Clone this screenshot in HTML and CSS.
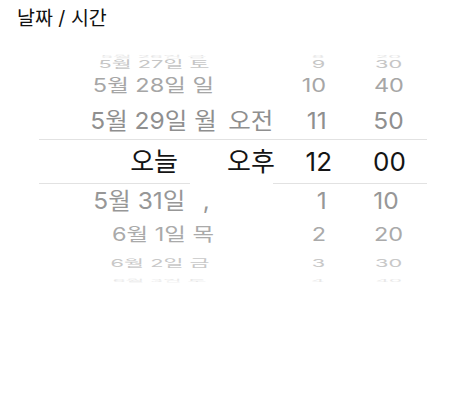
FILE: index.html
```html
<!DOCTYPE html>
<html lang="ko">
<head>
<meta charset="utf-8">
<link rel="stylesheet" href="styles.css">
</head>
<body>
<h1 class="title">날짜 / 시간</h1>
<div class="picker">
  <div class="row r4"><span class="c date">5월 26일 금</span><span class="c ampm"></span><span class="c hour">8</span><span class="c min">20</span></div>
  <div class="row r3"><span class="c date">5월 27일 토</span><span class="c ampm"></span><span class="c hour">9</span><span class="c min">30</span></div>
  <div class="row r2"><span class="c date">5월 28일 일</span><span class="c ampm"></span><span class="c hour">10</span><span class="c min">40</span></div>
  <div class="row r1"><span class="c date">5월 29일 월</span><span class="c ampm">오전</span><span class="c hour">11</span><span class="c min">50</span></div>
  <div class="row sel"><span class="c date">오늘</span><span class="c ampm">오후</span><span class="c hour">12</span><span class="c min">00</span></div>
  <div class="row b1"><span class="c date">5월 31일 <span class="wd">,</span></span><span class="c ampm"></span><span class="c hour">1</span><span class="c min">10</span></div>
  <div class="row b2"><span class="c date">6월 1일 목</span><span class="c ampm"></span><span class="c hour">2</span><span class="c min">20</span></div>
  <div class="row b3"><span class="c date">6월 2일 금</span><span class="c ampm"></span><span class="c hour">3</span><span class="c min">30</span></div>
  <div class="row b4"><span class="c date">6월 3일 토</span><span class="c ampm"></span><span class="c hour">4</span><span class="c min">40</span></div>
</div>
</body>
</html>
```
FILE: styles.css
```css
html, body {
  margin: 0;
  background: #fff;
}
body {
  font-family: Inter, "Noto Sans CJK KR", sans-serif;
  width: 466px;
  height: 412px;
  overflow: hidden;
}
.title {
  margin: 0;
  padding: 6px 0 0 17px;
  height: 44px;
  box-sizing: border-box;
  font-size: 19.5px;
  font-weight: 400;
  line-height: 24px;
  color: #111;
}
.picker {
  margin-left: 39px;
  width: 388px;
}
.row {
  display: grid;
  grid-template-columns: 181px 60px 55px 92px;
  align-items: center;
  font-size: 25px;
  line-height: 1;
  white-space: nowrap;
}
.c {
  display: block;
}
.date {
  text-align: right;
  padding-right: 2px;
  transform-origin: 63% 50%;
}
.wd {
  display: inline-block;
  width: 25px;
  text-align: center;
  padding-left: 4px;
  box-sizing: border-box;
}
.ampm {
  padding-left: 8px;
  transform-origin: 30% 50%;
}
.hour {
  text-align: right;
  padding-right: 8px;
  transform-origin: 60% 50%;
}
.min {
  padding-left: 38px;
  transform-origin: 58% 50%;
}
.r4 { height: 8px; color: #e6e6e6; }
.r3 { height: 16px; color: #c6c6c6; }
.r2 { height: 35px; color: #a6a6a6; }
.r1 { height: 36px; color: #8f8f8f; }
.b1 { height: 34px; color: #979797; }
.b2 { height: 33px; color: #aaaaaa; }
.b3 { height: 17px; color: #c8c8c8; }
.b4 { height: 10px; color: #e8e8e8; }

.r4 .c, .b4 .c { transform: scale(0.82, 0.12); }
.r3 .c, .b3 .c { transform: scale(0.87, 0.43); }
.r2 .c, .b2 .c { transform: scale(0.94, 0.73); }
.r1 .c, .b1 .c { transform: scale(0.98, 0.93); }

.sel {
  height: 45px;
  box-sizing: border-box;
  border-top: 1px solid #e2e2e2;
  font-size: 26px;
  color: #141414;
  background:
    linear-gradient(to right, #e2e2e2 0 151px, transparent 151px 234px, #e2e2e2 234px) left bottom / 100% 1px no-repeat;
}
.sel .date {
  padding-right: 42px;
}
.sel .ampm {
  padding-left: 7px;
}
.sel .hour {
  padding-right: 3px;
}
```
